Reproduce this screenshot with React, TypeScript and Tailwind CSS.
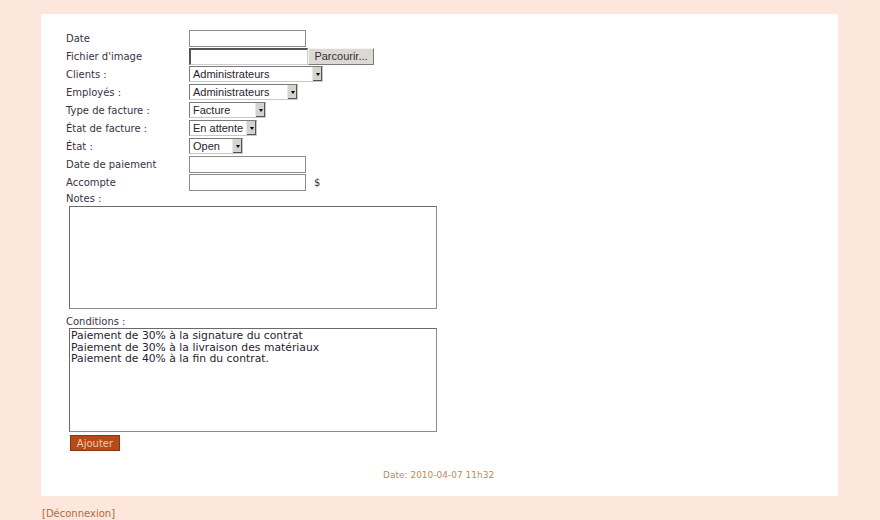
import React from "react";

const labelFont = { fontFamily: '"DejaVu Sans", Verdana, sans-serif' };

const Select = ({ value, width }: { value: string; width: string }) => (
  <div
    className={`flex h-[16px] items-stretch border border-[#7a7a7a] border-b-[#c8c8c8] border-r-[#c8c8c8] bg-white ${width}`}
  >
    <span className="flex-1 pl-[3px] text-[11px] leading-[14px] text-[#2a2230]" style={{ fontFamily: '"Liberation Sans", Arial, sans-serif' }}>
      {value}
    </span>
    <span className="flex w-[10px] items-center justify-center border-l border-[#e8e8e8] bg-[#d6d3ce] shadow-[inset_-1px_-1px_0_#555]">
      <span className="h-0 w-0 border-x-[2px] border-t-[3px] border-x-transparent border-t-black" />
    </span>
  </div>
);

const TextInput = ({ width = "w-[117px]" }: { width?: string }) => (
  <div className={`h-[17px] border border-[#8c8c8c] bg-white ${width}`} />
);

const Row = ({ label, children }: { label: string; children: React.ReactNode }) => (
  <div className="flex h-[18px] items-center">
    <div className="w-[123px] text-[10px] text-[#3b3145]" style={labelFont}>
      {label}
    </div>
    {children}
  </div>
);

export default function App() {
  return (
    <div className="min-h-[520px] w-[880px] bg-[#fde7dc] pt-[14px]" style={labelFont}>
      <div className="ml-[41px] h-[482px] w-[797px] bg-white pl-[25px] pt-[15px]">
        <Row label="Date">
          <TextInput />
        </Row>
        <Row label="Fichier d'image">
          <div className="flex h-[17px]">
            <div className="w-[119px] border-l-2 border-t-2 border-b border-r border-[#555] border-b-[#ccc] border-r-[#ccc] bg-white" />
            <div
              className="flex w-[66px] items-center justify-center border border-[#f4f4f4] border-b-[#7a7a7a] border-r-[#7a7a7a] bg-[#dcd8d2] text-[11px] text-[#3a2a40]"
              style={{ fontFamily: '"Liberation Sans", Arial, sans-serif' }}
            >
              Parcourir...
            </div>
          </div>
        </Row>
        <Row label="Clients :">
          <Select value="Administrateurs" width="w-[134px]" />
        </Row>
        <Row label="Employés :">
          <Select value="Administrateurs" width="w-[109px]" />
        </Row>
        <Row label="Type de facture :">
          <Select value="Facture" width="w-[77px]" />
        </Row>
        <Row label="État de facture :">
          <Select value="En attente" width="w-[68px]" />
        </Row>
        <Row label="État :">
          <Select value="Open" width="w-[54px]" />
        </Row>
        <Row label="Date de paiement">
          <TextInput />
        </Row>
        <Row label="Accompte">
          <TextInput />
          <span className="ml-[8px] text-[10px] text-[#3b3145]">$</span>
        </Row>

        <div className="flex h-[14px] items-end text-[10px] leading-[12px] text-[#3b3145]">Notes :</div>
        <div className="ml-[3px] mt-[1px] h-[103px] w-[368px] border border-[#8c8c8c] border-l-[#6a6a6a] border-t-[#6a6a6a] bg-white" />

        <div className="flex h-[19px] items-end text-[10px] leading-[12px] text-[#3b3145]">Conditions :</div>
        <div className="ml-[3px] h-[104px] w-[368px] border border-[#8c8c8c] border-l-[#6a6a6a] border-t-[#6a6a6a] bg-white px-[1px] pt-[1px] text-[10.8px] leading-[11.5px] text-[#2a2230]">
          <div>Paiement de 30% à la signature du contrat</div>
          <div>Paiement de 30% à la livraison des matériaux</div>
          <div>Paiement de 40% à la fin du contrat.</div>
        </div>

        <button
          className="ml-[4px] mt-[3px] flex h-[16px] w-[50px] items-center justify-center bg-[#b64a18] text-[10px] text-[#f3c9a8] shadow-[inset_0_0_0_1px_#8a3510]"
          style={labelFont}
        >
          Ajouter
        </button>

        <div className="mt-[18px] pl-[317px] text-[9px] text-[#c0895a]">Date: 2010-04-07 11h32</div>
      </div>
      <div className="ml-[42px] mt-[10px] text-[10px] text-[#b06a3a]">[Déconnexion]</div>
    </div>
  );
}
